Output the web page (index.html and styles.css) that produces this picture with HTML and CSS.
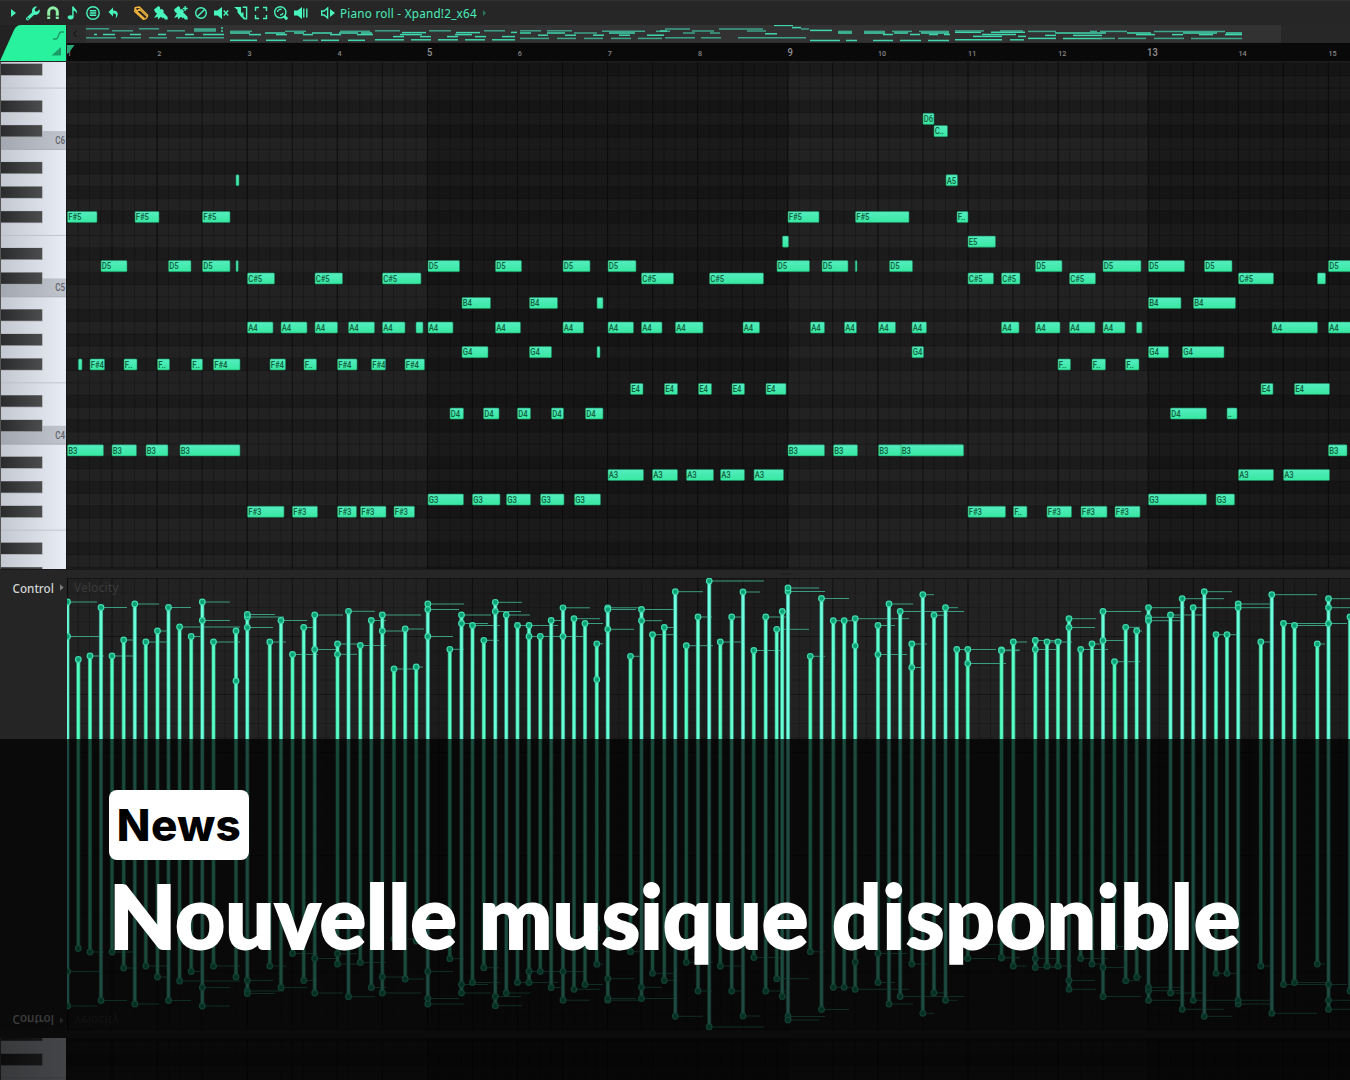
FILE: index.html
```html
<!DOCTYPE html>
<html lang="fr">
<head>
<meta charset="utf-8">
<title>Nouvelle musique disponible</title>
<link rel="stylesheet" href="styles.css">
</head>
<body>
<main class="cover">
  <section class="editor">
    <header class="toolbar">
      <div class="tools">
        <svg class="tool" viewBox="0 0 20 20"><path class="fill" d="M8 6l5 4-5 4z"/></svg>
        <svg class="tool" viewBox="0 0 20 20"><path class="fill" fill-rule="evenodd" d="M3.3 14.7L9 9.4C8.400 6 10.600 3.200 14.200 3.600L11.700 6.200l.4 2 2 .4 2.600-2.400c.7 4-2.200 6.200-5.500 5.600L5.600 17C4.200 18.100 2 16.200 3.300 14.700zM4.200 15.500a.8.8 0 1 0 1.600 0a.8.8 0 1 0-1.600 0z"/></svg>
        <svg class="tool magnet" viewBox="0 0 20 20"><path class="line thick" d="M5.700 16V9a4.300 4.300 0 0 1 8.600 0v7"/><path class="cut" d="M3.500 13.200h4.200M12.300 13.200h4.200"/></svg>
        <svg class="tool" viewBox="0 0 20 20"><ellipse class="fill" cx="7.600" cy="14.300" rx="2.900" ry="2.100"/><path class="line" d="M9.900 14V4"/><path class="fill" d="M9.300 3.500h1.500c.3 2.600 4.300 2.800 3.100 7.500-.5-2.500-2-3-3.500-3.200z"/></svg>
        <svg class="tool" viewBox="0 0 20 20"><circle class="line" cx="10" cy="10" r="6.200"/><path class="line" d="M6.800 7.700h6.400M6.800 10h6.400M6.800 12.300h6.400"/></svg>
        <svg class="tool" viewBox="0 0 20 20"><path class="fill" d="M5.500 9l4.500-4.500v3c5.200-.4 6.400 4.500 2.500 8 1.300-3.300.6-4.900-2.500-5v3z"/></svg>
      </div>
      <div class="tools paint">
        <svg class="tool pencil" viewBox="0 0 20 20"><path class="line" d="M3.600 8.500L4.200 4.600 8.400 4 16.600 12c.6 2-2 4.700-4.200 4.300zM6 8.800l7.300 6.800M8.200 6l7.700 7.400M4.200 4.600l1.600 4.200L8.400 6"/></svg>
        <svg class="tool" viewBox="0 0 20 20"><path class="fill" d="M3 6.500L7.500 3l1.300 1 .6 2.600L11 6l2 2-.8 1.200 4.300 4.600.3 2.600-2.800.2-1.500-2-.8.800-1.600-1.700L7 16.500l-.2-2.700L3 15l3-4.500-2-1.500z"/></svg>
        <svg class="tool" viewBox="0 0 20 20"><path class="fill" d="M3 6.500L7.500 3l1.300 1 .6 2.600L11 6l2 2-.8 1.200 4.300 4.600.3 2.600-2.800.2-1.500-2-.8.800-1.600-1.700L7 16.500l-.2-2.700L3 15l3-4.500-2-1.500z"/><path class="line" d="M14.200 3v5M11.700 5.500h5"/></svg>
        <svg class="tool" viewBox="0 0 20 20"><circle class="line" cx="10" cy="10" r="5.300"/><path class="line" d="M6.500 13.500l7-7"/></svg>
        <svg class="tool" viewBox="0 0 20 20"><path class="fill" d="M3 7.500h3.500L11 4v12l-4.500-3.500H3z"/><path class="line" d="M12.700 7.500l4.500 5M17.200 7.500l-4.500 5"/></svg>
        <svg class="tool" viewBox="0 0 20 20"><path class="fill" d="M3 4h7v9.500L6.500 9.500V7z"/><path class="line" d="M11.700 4.300h3.900v12"/><path class="fill" d="M10.500 9.500h2v4l3.500 3h-3l-3.500-3.500z"/></svg>
        <svg class="tool" viewBox="0 0 20 20"><path class="line" d="M4.500 8V4.500H8M12 4.500h3.500V8M15.500 12v3.500H12M8 15.500H4.500V12"/></svg>
        <svg class="tool" viewBox="0 0 20 20"><circle class="line" cx="9.300" cy="9.300" r="5.600"/><path class="line thick" d="M13.200 13.200l3 3"/><path class="line" d="M6.500 9a3 3 0 0 1 4-2.500M12 10a3 3 0 0 1-3 2"/></svg>
        <svg class="tool" viewBox="0 0 20 20"><path class="fill" d="M3 7.500h3.500L11 4v12l-4.500-3.500H3z"/><path class="line" d="M12.800 5.500v9M15.800 5.500v9"/></svg>
      </div>
      <div class="title">
        <svg class="tool" viewBox="0 0 20 20"><path class="line" d="M3.700 8h2.500L9.600 5v10l-3.400-3H3.700z"/><path class="fill" d="M12 6l5 4-5 4z"/></svg>
        <span class="title-text">Piano roll - Xpand!2_x64</span>
        <svg class="more" viewBox="0 0 5 8"><path d="M1 1l3 3-3 3z"/></svg>
      </div>
    </header>
    <div class="top">
      <svg class="tab" viewBox="0 0 67 37"><path class="tab-shape" d="M0 36L14 5Q16.500 0 21 0H66V36z"/><path class="tab-line" d="M53 14h3c2.500 0 2.500-7 5-7h3"/><path class="tab-mark" d="M61 22v8.500h-9.500z"/></svg>
      <div class="timeline">
        <svg class="minimap" id="minimap" viewBox="67 25 1283 18"></svg>
        <svg class="ruler" id="ruler" viewBox="67 43 1283 19"></svg>
      </div>
    </div>
    <svg class="roll" id="roll" viewBox="0 62 1350 508"></svg>
    <div class="divider"><svg viewBox="0 0 12 2"><path d="M0 1h12"/></svg></div>
    <div class="velocity" id="velocity">
      <div class="lane-head"><span>Control</span><svg viewBox="0 0 5 8"><path d="M0 0l4.500 4L0 8z"/></svg></div>
      <div class="lane">
        <svg class="stems" id="stems" viewBox="67 578 1283 226"></svg>
        <span class="lane-name">Velocity</span>
      </div>
    </div>
  </section>
  <section class="reflection" id="reflection" aria-hidden="true">
    <div class="divider"></div>
    <svg class="roll-end" id="roll-end" viewBox="0 528 1350 42"></svg>
  </section>
  <section class="caption">
    <span class="badge">News</span>
    <h1 class="headline"><span class="w1">Nouvelle</span> <span class="w2">musique</span> <span class="w3">disponible</span></h1>
  </section>
</main>
<script src="app.js"></script>
</body>
</html>
```
FILE: styles.css
```css
* { box-sizing: border-box; }
body { margin: 0; background: #0a0a0a; }
svg { display: block; }
.cover { position: relative; width: 1350px; height: 1080px; overflow: hidden; background: #252525; font-family: "Noto Sans", "Open Sans", sans-serif; }

.toolbar { display: flex; align-items: center; height: 25px; padding: 0 0 0 3px; background: #262626; border-top: 1px solid #313131; }
.tools { display: flex; }
.paint { margin-left: 8px; }
.tool { width: 20px; height: 20px; flex: none; }
.title { display: flex; align-items: center; margin-left: 7px; color: #48eebb; }
.title-text { width: 138px; margin-left: 2px; font-size: 11.700px; line-height: 18px; letter-spacing: .24px; white-space: nowrap; }
.more { width: 5px; height: 8px; margin-left: 4px; }
.more path { fill: #2b7a5d; }
.fill { fill: #48f5bd; }
.line { fill: none; stroke: #48f5bd; stroke-width: 1.4; }
.thick { stroke-width: 3; }
.cut { stroke: #262626; stroke-width: 1; }
.magnet .line { stroke: #8ff0a4; }
.pencil .line { stroke: #f0b43c; stroke-width: 1.3; }

.top { display: flex; height: 37px; }
.tab { width: 67px; height: 37px; background: #222; }
.tab-shape { fill: #28f29d; }
.tab-line { fill: none; stroke: #1c9b68; stroke-width: 1.5; }
.tab-mark { fill: #1c9b68; }
.timeline { width: 1283px; }
.minimap { width: 1283px; height: 18px; background: #272727; }
.ruler { width: 1283px; height: 19px; background: #090909; }
.bar-number { font: 500 8px Roboto, sans-serif; fill: #858585; text-anchor: middle; }
.bar-number.major { font-size: 10.500px; fill: #929292; }

.roll { width: 1350px; height: 508px; }
.note { fill: url(#note-fill); stroke: #1c8a60; stroke-width: .6; }
.note-name { font: 500 9.500px Roboto, sans-serif; fill: #14603f; }
.key-name { font: 500 10px Roboto, sans-serif; fill: #5f636b; }

.divider { height: 8px; padding: 3px 0 0 781px; background: #262626; }
.divider svg { width: 11px; height: 2px; }
.divider path { stroke: #111; stroke-dasharray: 1 1; }
.velocity { display: flex; height: 226px; background: #252525; }
.lane-head { display: flex; align-items: center; width: 67px; height: 19px; padding-left: 12.500px; gap: 5px; color: #d2d6d6; font-size: 11.700px; font-weight: 500; }
.lane-head span { width: 42.500px; }
.lane-head svg { width: 4px; height: 7px; }
.lane-head path { fill: #7d7d7d; }
.lane { position: relative; width: 1283px; }
.stems { width: 1283px; height: 226px; }
.lane-name { position: absolute; left: 7px; top: 0; font-size: 11.700px; line-height: 19px; letter-spacing: .3px; color: #3b3b3b; }

.reflection .velocity { transform: scaleY(-1); }
.roll-end { width: 1350px; height: 42px; transform: scaleY(-1); }

.caption { position: absolute; left: 0; top: 739px; width: 1350px; height: 341px; padding: 51px 0 0 109px; background: rgba(0, 0, 0, .71); }
.badge { display: flex; align-items: center; justify-content: center; width: 140px; height: 70px; border-radius: 8px; background: #fff; color: #000; font: 800 44px/70px Inter, sans-serif; letter-spacing: .4px; }
.headline { display: flex; margin: 3px 0 0; color: #fff; font: 900 87px/106px Lato, sans-serif; white-space: nowrap; -webkit-text-stroke: 1.800px #fff; }
.w1 { width: 370px; }
.w2 { width: 353px; }
.w3 { letter-spacing: .8px; }
```
FILE: app.js
```js
const BAR = 90.1, LEFT = 67, ROW = 12.28, C5 = 290.7;
const BLACK = [1, 3, 6, 8, 10];
const SCALE = ['C', 'C#', 'D', 'D#', 'E', 'F', 'F#', 'G', 'G#', 'A', 'A#', 'B'];
const rect = (x, y, w, h, fill, more = '') => `<rect x="${x}" y="${y}" width="${w}" height="${h}" fill="${fill}" ${more}/>`;
const line = (x1, y1, x2, y2, c, w = 1) => `<path d="M${x1} ${y1}L${x2} ${y2}" stroke="${c}" stroke-width="${w}"/>`;

// Notes by pitch: start-end, with an optional label override after a colon.
const notes = {
  'C#6': '934-947.5:C..',
  'D6': '923-934',
  'A5': '236-239 946-957.5',
  'F#5': '67.5-97 135-159 202.5-230 788-819 855.5-909 957-968:F..',
  'E5': '782.5-788.5 968-995.5',
  'D5': '101-127 168.5-191 202.5-230 236-238.2 428-459.5 495.5-521.5 563-590 608-636 777-809.5 822-848 855.3-857 889.5-912.5 1035.5-1062 1103-1141 1148.5-1184.5 1204.5-1232 1328.5-1354',
  'C#5': '247.5-274.5 315-342.5 382.5-421 641.5-673.5 709.5-763.5 968-993.5 1001.5-1020 1069.5-1095.5 1238.5-1273.5 1317.5-1325.5',
  'B4': '462-490.5 529.5-557.5 597-603 1148.5-1181 1193.5-1235.5',
  'A4': '247.5-273 281-307 315-337.5 348.5-374.5 382.5-405 416-423 428-453 495.5-520.5 563-583.5 608-633.5 641.5-662 675.5-703 743-759.5 810.5-824.5 844.5-856.5 878.5-895.5 912-926.5 1001.5-1019 1035.5-1060 1069.5-1095 1103-1125 1136.5-1142 1272-1317.5 1328.5-1354',
  'G4': '462-488 529.5-551.5 597-600 912-923.5 1148.5-1168.5 1182.5-1224',
  'F#4': '78.3-82 90-104.5 124-137:F.. 157.5-169.5:F.. 191.5-202.5:F.. 213.5-240 270-285.5 304-316.5:F.. 337.5-357 371.5-385.5 405-424.5 1058-1070.5:F.. 1092-1105.5:F.. 1125.5-1139:F..',
  'E4': '630.5-643 664.5-677.5 698.5-711.5 732-744.5 766-786 1261-1273 1294.5-1329.5',
  'D4': '450-463.5 483.5-499 517.5-530.5 551.5-563.5 585.5-603 1170.5-1206.5 1227-1237:..',
  'B3': '67.5-103.5 112-136.5 146-168 180-240 788-824.5 833.5-857.5 878.5-963.5 901-963.5 1328.5-1347',
  'A3': '608-643.5 652.5-677.5 686.5-713.5 720.5-744.5 754-783.5 1238.5-1273.5 1283.5-1329.5',
  'G3': '428-463.5 472.5-500 506.5-530.5 540.5-564 574.5-600.5 1148.5-1206.5 1216-1234.5',
  'F#3': '247.5-284 292.5-317.5 337.5-356.5 360.5-386 394-414.5 968-1005.5 1013.5-1027:F.. 1047-1071.5 1081-1107 1115-1140'
};

// Velocity handles: x, y, end of the duration tail.
const heads = `67.5,602,97 67.5,636.5,103 78.3,659.5 90,656,104 101,607.5,127 112,656,137 123.7,640,137 134.8,604,159 145.8,642,168 157.5,631,168 168.5,607.5,191 179.6,627,240 191.2,636.5,202 202.3,602,230 202.3,620.5,230 213.5,642,240 236,631 236,681 247.3,617,284 247.3,614.5,275 247.3,627.5,273 269.8,642,286 281,620.5,307 292.5,654.5,318 303.7,627.5,317 314.7,615,343 314.7,649.5,338 337.5,644,360 337.5,654.3,357 348.5,611.3,375 360.3,645.5,386 371.3,620.5,386 382.3,615,421 382.3,631,405 394,669,415 405.2,629,424 416.2,667,423 427.8,604,464 427.8,609.5,459 427.8,636.5,453 449.8,649.3,464 461.5,615,491 461.5,623.5,488 472.5,625.5,500 483.8,640.3,499 495.3,602.3,522 495.3,611.5,521 506.3,615,530 517.5,625.5,529 529,625.5,558 529,636.5,551 540.3,636.5,564 551.2,620.5,564 563,607.8,590 563,636.5,584 574,618.7,600 585,623.5,603 596.8,643.8,603 596.8,679.5 607.8,607.8,644 607.8,609.5,636 607.8,629.3,634 630.5,656.3,642 641.5,609.5,674 641.5,620.7,662 652.5,634.7,677 664.3,627.5,677 675.3,591.7,703 686.3,645.7,713 698,617,712 709.2,581,764 720.3,642,745 731.7,617,745 743,592,760 753.8,650.5,781 765.7,617,787 776.7,629.3,809 782.2,611.5,788 788,591.5,825 788,588,819 810.3,656.3,825 821.5,598.5,849 833.3,620.7,845 844.2,620.7,856 855.2,618.7,909 855.2,645.8 878,625.5,895 878,654.5,907 889,604,913 900.2,611.5,964 911.8,644,927 911.8,667.5,922 922.8,594.7,934 934,615.2,948 945.5,607.7,958 956.8,649.5,968 967.8,649.5,996 967.8,663.5,1006 1001.5,650,1020 1001.5,650.7,1019 1013.3,642,1027 1035.3,640.5,1062 1035.3,649.5,1060 1047,642,1059 1058,642,1072 1069,618.7,1096 1069,627.5,1095 1080.7,649.5,1108 1092,644,1105 1103,611.5,1141 1103,640.5,1125 1114.5,661.7,1140 1125.7,627.3,1140 1136.7,631,1142 1148.5,607.7,1185 1148.5,617.3,1184 1148.5,620.7,1182 1170.5,615,1206 1182.2,598.7,1224 1193.2,607.7,1236 1204.3,591.7,1232 1216,634.7,1227 1227,634.7,1237 1238.2,604,1274 1238.2,607.7,1274 1260.8,642,1271 1271.8,594.7,1317 1283.5,623.5,1330 1294.5,625.5,1330 1317.3,644,1325 1328.5,598.7,1350 1328.5,607.7,1350 1328.5,623.5,1347 1350,617`
  .split(' ').map(t => t.split(',').map(Number));

// Overview strips: y, then start-end pairs; a trailing b marks brighter strips.
const overview = [
  [28.8, '86-109 139-159'], [30.8, '112-133 167-185'], [30, '194-216'], [34.5, '94-97b 103-115b 130-141b 158-166b 185-194b 203-224b'], [37.8, '86-116 121-141 149-167 176-224'], [28, '221-223b'], [31, '221-223b'],
  [31.3, '230-252 285-306 340-370'], [33, '230-250b 265-285b 294-304b 312-332b 339-358b 361-372b'], [34.6, '249-261b 276-287b 303-313b 330-341b 357-373b'], [40.3, '230-257b 266-286b 303-318 321-339b 348-365b'],
  [30.8, '375-400 429-451 484-505 520-541 547-572'], [32.6, '402-426b 456-480b'], [34.6, '400-422b 455-472b'], [36.6, '393-404b 420-431b 447-458b 475-486b 502-515b'], [39.8, '375-404b 411-431b 438-458b 465-485b 492-515b'], [32.4, '511-517b'],
  [33, '520-531b 547-565b 574-597 609-635b 683-695 710-720'], [31.3, '602-645 656-670'], [35.2, '538-548b 565-576b 593-604b 619-630b 647-664b'], [38.4, '520-549 557-576 584-603 611-631 638-662'],
  [29, '665-690 719-763'], [31, '660-667b 692-714 747-766'], [33.8, '765-777b'], [37.8, '665-695 701-721 738-806'],
  [25.4, '774-793b'], [27.6, '792-801b'], [29, '801-809'], [30.4, '810-832b'], [31.4, '838-852 864-885 892-912 919-949'], [33, '838-852b 864-885b 894-908b 921-949b'], [34.5, '883-893b 910-920b 929-938b 944-950b'], [40.5, '810-840b 846-857b 873-893b 900-921b 928-949b'],
  [30.9, '955-984 1000-1023'], [32.3, '955-981b 991-1025b'], [34.4, '982-1016b'], [36.4, '973-1002b 1018-1026b'], [39.8, '955-1002b 1010-1024b'],
  [31.4, '1028-1056 1090-1097 1100-1127 1154-1225'], [33, '1055-1106b 1127-1151b 1183-1217b 1226-1242b'], [34.6, '1136-1155b 1172-1183b 1199-1213b 1225-1242b'], [35.4, '1045-1056b 1073-1102b'], [38.4, '1028-1056b 1063-1102b 1100-1115 1118-1146 1154-1184 1191-1242']
];

const isBlack = s => BLACK.includes(((s % 12) + 12) % 12);
const pitch = n => SCALE.indexOf(n.slice(0, -1)) + 12 * (n.slice(-1) - 5);

function columns(y, h) {
  let out = '';
  for (let i = 1; i <= 114; i++) {
    const x = (LEFT + i * BAR / 8).toFixed(1);
    out += i % 8 === 0 ? line(x, y, x, y + h, '#0c0c0c', 1) : line(x, y, x, y + h, '#000', i % 4 ? .22 : .5);
  }
  return out;
}

function board(named) {
  let out = '';
  for (let s = -26; s <= 20; s++) {
    const y = C5 - ROW * s - ROW / 2;
    if (y > 570 || y < 40) continue;
    out += rect(LEFT, y, 1283, ROW + .2, isBlack(s) ? '#1b1b1b' : '#222');
    out += line(LEFT, y + ROW, 1350, y + ROW, '#161616', .5);
  }
  out += rect(427.4, 62, 360.4, 508, '#000', 'opacity=".22"') + rect(1148.2, 62, 202, 508, '#000', 'opacity=".22"');
  out += columns(62, 508);
  out += rect(0, 62, 66, 508, 'url(#ivory)') + line(66.5, 62, 66.5, 570, '#151515');
  for (let s = -24; s <= 18; s++) {
    const y = C5 - ROW * s - ROW / 2, n = ((s % 12) + 12) % 12;
    if (n === 0 && s > -24) {
      out += rect(0, y - 6.1, 66, ROW + 6.1, '#34383f', 'opacity=".22"') + line(0, y + ROW, 66, y + ROW, '#9fa3ab', .7);
      if (named) out += `<text class="key-name" transform="translate(55.3 ${y + 6.7}) scale(.8 1)">C${5 + s / 12}</text>`;
    }
    if (n === 5) out += line(0, y + ROW, 66, y + ROW, '#b9bcc4', .8);
    if (isBlack(s)) out += rect(0, y, 42.7, ROW, '#a5a7ab') + rect(0, y + .3, 42, ROW - 1, 'url(#ebony)');
  }
  return out + line(.5, 62, .5, 570, '#555');
}

const defs = `<defs><linearGradient id="note-fill" x2="0" y2="1"><stop stop-color="#55edc0"/><stop offset="1" stop-color="#36e8a0"/></linearGradient>
<linearGradient id="ivory"><stop stop-color="#c3c7cf"/><stop offset="1" stop-color="#e9edf6"/></linearGradient>
<linearGradient id="ebony"><stop stop-color="#292a2c"/><stop offset="1" stop-color="#4b4c4e"/></linearGradient></defs>`;

let roll = defs + board(true) + rect(0, 569, 1350, 1, '#1a1a1a');
for (const [name, list] of Object.entries(notes)) {
  const y = C5 - ROW * pitch(name);
  for (const item of list.split(' ')) {
    const [span, custom] = item.split(':');
    const [a, b] = span.split('-').map(Number);
    roll += `<rect class="note" x="${a}" y="${(y - 5.5).toFixed(1)}" width="${b - a}" height="11.1" rx="1"/>`;
    if (b - a > 9) roll += `<text class="note-name" transform="translate(${a + .7} ${(y + 3.3).toFixed(1)}) scale(.81 1)">${custom || name}</text>`;
  }
}
document.getElementById('roll').innerHTML = roll;
document.getElementById('roll-end').innerHTML = defs + board(false);

let ruler = '';
for (let n = 1; n <= 15; n++) {
  const x = LEFT + (n - 1) * BAR;
  const major = n % 4 === 1 && n > 1;
  ruler += `<text class="bar-number${major ? ' major' : ''}" transform="translate(${x + (n > 9 ? 4.2 : 2.3)} ${major ? 56 : 55.7}) scale(.9 1)">${n}</text>`;
}
ruler += '<path d="M67 45h7.500l-5 7-2.500 2z" fill="#25a873"/>' + line(67, 61.500, 1350, 61.500, '#1d1d1d');
document.getElementById('ruler').innerHTML = ruler;

let mini = rect(67, 25, 1214, 17.500, '#323232') + rect(67, 25, 18.500, 17.500, '#2c2c2c') + '<path d="M77 30.500l-3.500 3.200 3.500 3.200" fill="none" stroke="#111"/>';
for (const [y, list] of overview)
  for (const t of list.split(' ')) {
    const [a, b] = t.replace('b', '').split('-').map(Number);
    mini += line(a, y, b, y, t.endsWith('b') ? '#40d6ae' : '#3da58a', y === 30 ? 3.600 : 1.500);
  }
document.getElementById('minimap').innerHTML = mini;

let stems = rect(67, 578, 1283, 226, '#222') + rect(427.4, 578, 360.4, 226, '#1c1c1c') + rect(1148.2, 578, 202, 226, '#1c1c1c');
for (let i = 0; i < 16; i++) stems += line(67, 578.5 + i * 14.5, 1350, 578.5 + i * 14.5, '#111', i % 4 ? .35 : .8);
stems += columns(578, 226) + line(67.5, 578, 67.5, 804, '#090909');
const tops = {};
for (const [x, y, end] of heads) {
  tops[x] = Math.min(tops[x] || 999, y);
  if (end) stems += line(x, y, end, y, '#3a9c80', 1);
}
for (const [x, y] of Object.entries(tops)) {
  const t = Math.max(0, Math.min(1, (y - 590) / 70));
  const c = `rgb(${112 - 32 * t | 0},255,${226 - 38 * t | 0})`;
  stems += line(x, y, x, 804, '#35937a', 4.2) + line(x, y, x, 804, c, 2.7);
}
for (const [x, y] of heads) stems += `<circle cx="${x}" cy="${y}" r="2.800" fill="#0ca174" stroke="#41dcae" stroke-width="1.200"/>`;
document.getElementById('stems').innerHTML = stems;

const mirrored = document.getElementById('velocity').cloneNode(true);
mirrored.removeAttribute('id');
document.getElementById('reflection').prepend(mirrored);
```
